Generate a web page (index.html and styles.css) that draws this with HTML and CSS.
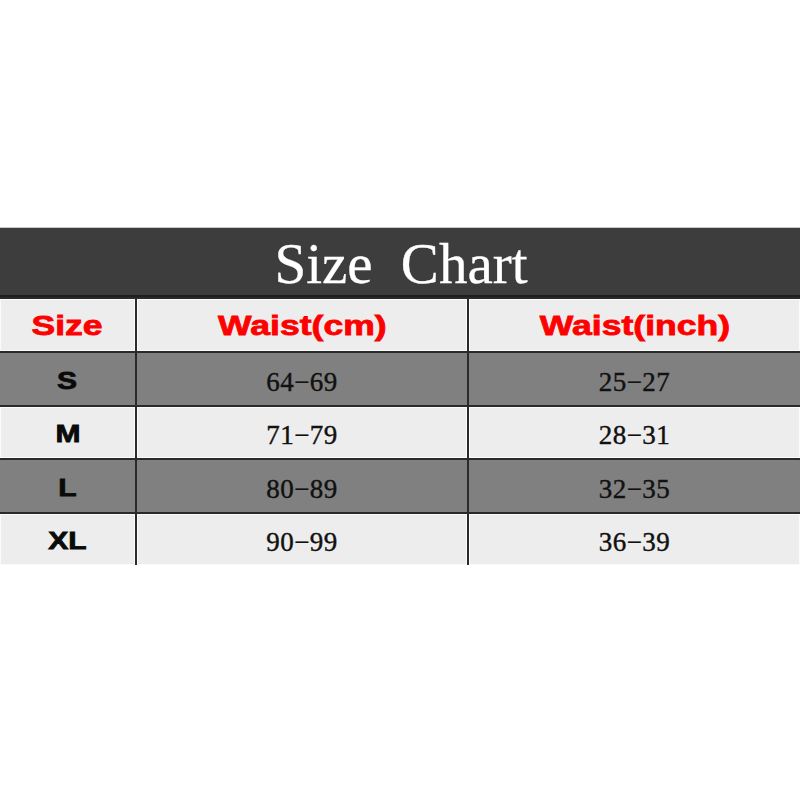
FILE: index.html
```html
<!DOCTYPE html>
<html>
<head>
<meta charset="utf-8">
<link rel="stylesheet" href="styles.css">
</head>
<body>
<div class="chart">
  <div class="title"><span>Size Chart</span></div>
  <div class="grid">
    <div class="cell light head"><span class="wide">Size</span></div>
    <div class="cell light head"><span class="wide">Waist(cm)</span></div>
    <div class="cell light head"><span class="wide">Waist(inch)</span></div>

    <div class="cell gray size"><span class="wide">S</span></div>
    <div class="cell gray num">64−69</div>
    <div class="cell gray num">25−27</div>

    <div class="cell light size"><span class="wide">M</span></div>
    <div class="cell light num">71−79</div>
    <div class="cell light num">28−31</div>

    <div class="cell gray size"><span class="wide">L</span></div>
    <div class="cell gray num">80−89</div>
    <div class="cell gray num">32−35</div>

    <div class="cell light size"><span class="wide">XL</span></div>
    <div class="cell light num">90−99</div>
    <div class="cell light num">36−39</div>
  </div>
</div>
</body>
</html>
```
FILE: styles.css
```css
html, body {
  margin: 0;
  padding: 0;
  background: #ffffff;
}
body {
  padding-top: 227px;
}
.chart {
  width: 800px;
  background: #2a2a2a;
  border-top: 1px solid #c8c8c8;
}
.title {
  height: 69px;
  background: #3d3d3d;
  display: flex;
  align-items: center;
  justify-content: center;
  border-bottom: 2px solid #1e1e1e;
  box-sizing: border-box;
}
.title span {
  font-family: "Liberation Serif", "Times New Roman", serif;
  font-size: 57px;
  color: #ffffff;
  word-spacing: 14px;
  padding-top: 4px;
  padding-left: 2px;
  -webkit-text-stroke: 0.3px #ffffff;
}
.grid {
  display: grid;
  grid-template-columns: 135px 330px 1fr;
  grid-template-rows: 52px 52px 51px 52px 51px;
  column-gap: 2px;
  row-gap: 2px;
  padding-top: 2px;
}
.cell {
  display: flex;
  align-items: center;
  justify-content: center;
  box-sizing: border-box;
}
.light {
  background: #ededed;
  box-shadow: inset 0 0 0 1px #fbfbfb;
}
.gray {
  background: #808080;
}
.wide {
  display: inline-block;
  transform: scaleX(1.27);
  font-family: "Liberation Sans", Arial, sans-serif;
  font-weight: bold;
}
.head .wide {
  font-size: 28px;
  color: #ff0000;
  padding-top: 2px;
  -webkit-text-stroke: 0.8px #ff0000;
}
.size .wide {
  font-size: 24px;
  color: #0a0a0a;
  transform: scaleX(1.25);
  padding-top: 3px;
  -webkit-text-stroke: 0.8px #0a0a0a;
}
.num {
  font-family: "Liberation Serif", "Times New Roman", serif;
  font-size: 27px;
  color: #111111;
  padding-top: 6px;
  letter-spacing: 0.5px;
  -webkit-text-stroke: 0.4px #111111;
}
```
